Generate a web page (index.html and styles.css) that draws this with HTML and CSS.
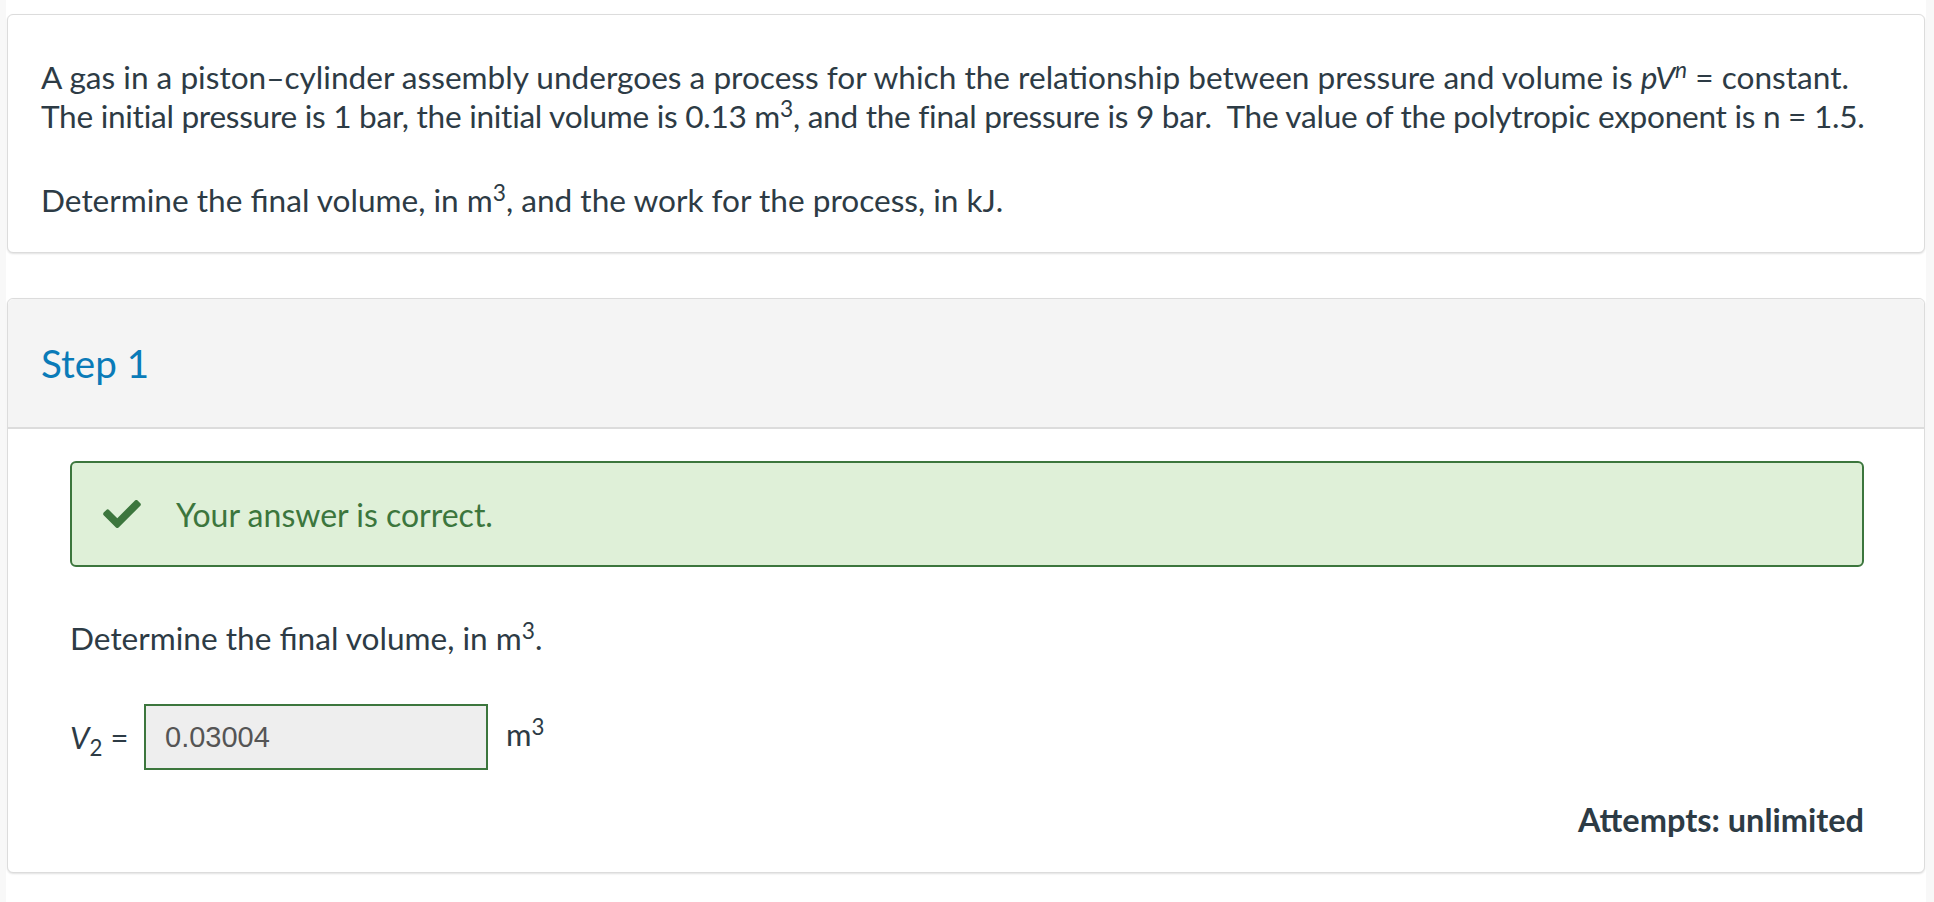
FILE: index.html
```html
<!DOCTYPE html>
<html lang="en">
<head>
<meta charset="utf-8">
<title>Question</title>
<link rel="stylesheet" href="styles.css">
</head>
<body>
<div class="page">
  <section class="card question">
    <p>A gas in a piston–cylinder assembly undergoes a process for which the relationship between pressure and volume is <i>pV</i><sup><i>n</i></sup> = constant. <span class="tight">The initial pressure is 1 bar, the initial volume is 0.13 m<sup>3</sup>, and the final pressure is 9 bar.&nbsp; The value of the polytropic exponent is n = 1.5.</span></p>
    <p>Determine the final volume, in m<sup>3</sup>, and the work for the process, in kJ.</p>
  </section>

  <section class="card step">
    <header class="step-head">
      <h2>Step 1</h2>
    </header>
    <div class="step-body">
      <div class="alert">
        <svg class="check" viewBox="0 66 512 380" width="38" height="28" aria-hidden="true"><path fill="#3c763d" d="M173.898 439.404l-166.4-166.4c-9.997-9.997-9.997-26.206 0-36.204l36.203-36.204c9.997-9.998 26.207-9.998 36.204 0L192 312.69 432.095 72.596c9.997-9.997 26.207-9.997 36.204 0l36.203 36.204c9.997 9.997 9.997 26.206 0 36.204l-294.4 294.401c-9.998 9.997-26.207 9.997-36.204-.001z"/></svg>
        <span>Your answer is correct.</span>
      </div>
      <p class="prompt">Determine the final volume, in m<sup>3</sup>.</p>
      <div class="answer-row">
        <span class="var"><i>V</i><sub>2</sub> =</span>
        <div class="input">0.03004</div>
        <span class="unit">m<sup>3</sup></span>
      </div>
      <div class="attempts">Attempts: unlimited</div>
    </div>
  </section>
</div>
</body>
</html>
```

FILE: styles.css
```css
html, body {
  margin: 0;
  padding: 0;
}
body {
  background: #f8f8f8;
  font-family: Lato, "Open Sans", sans-serif;
  color: #2d3b45;
}
.page {
  background: #fff;
  margin: 0 8px 0 6px;
  padding: 14px 1px 30px 1px;
  min-height: 858px;
}
.card {
  border: 1px solid #dcdcdc;
  border-radius: 6px;
  box-shadow: 0 1px 2px rgba(0,0,0,0.12);
  background: #fff;
}
.question {
  padding: 43px 33px 32px;
  margin-bottom: 45px;
}
.question p {
  margin: 0;
  font-size: 31.6px;
  line-height: 39px;
}
.question p + p {
  margin-top: 45px;
}
.tight {
  letter-spacing: -0.28px;
}
sup {
  font-size: 0.72em;
  line-height: 0;
  vertical-align: 0.5em;
}
sub {
  font-size: 0.72em;
  line-height: 0;
  vertical-align: -0.3em;
}
.step-head {
  background: #f4f4f4;
  border-bottom: 2px solid #dcdcdc;
  border-radius: 6px 6px 0 0;
  height: 128px;
  display: flex;
  align-items: center;
  padding: 0 33px;
}
.step-head h2 {
  margin: 0;
  font-weight: 400;
  font-size: 38.6px;
  color: #0a7bb8;
  line-height: 1;
}
.step-body {
  padding: 32px 60px 33px 62px;
}
.alert {
  background: #dff0d8;
  border: 2px solid #3c763d;
  border-radius: 6px;
  height: 102px;
  display: flex;
  align-items: center;
  padding-left: 31px;
  gap: 35px;
  color: #3c763d;
  font-size: 32px;
}
.check {
  display: block;
  flex: none;
}
.prompt {
  margin: 52px 0 0;
  font-size: 31.6px;
  line-height: 39px;
}
.answer-row {
  display: flex;
  align-items: center;
  margin-top: 46px;
  font-size: 31px;
}
.var {
  width: 74px;
  white-space: nowrap;
}
.input {
  box-sizing: border-box;
  width: 344px;
  height: 66px;
  border: 2px solid #3c763d;
  background: #eeeeee;
  color: #555;
  font-family: "Liberation Sans", Arial, sans-serif;
  font-size: 29px;
  display: flex;
  align-items: center;
  padding-left: 19px;
}
.unit {
  margin-left: 18px;
  margin-top: -6px;
}
.attempts {
  text-align: right;
  font-weight: 700;
  font-size: 32.5px;
  line-height: 39px;
  margin-top: 30px;
}
```
